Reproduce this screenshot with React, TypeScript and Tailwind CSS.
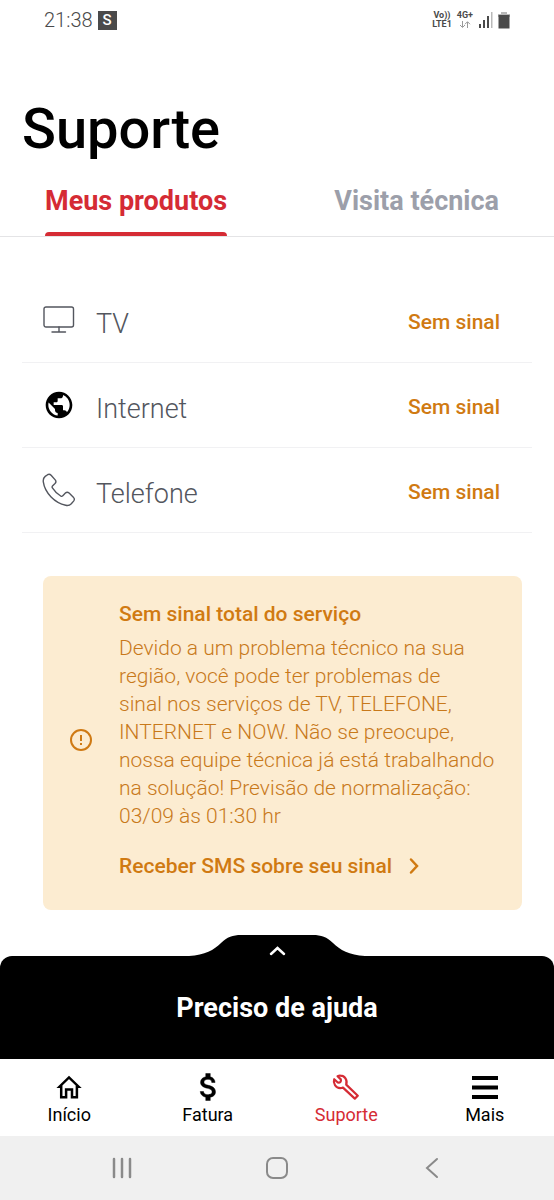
import type { ReactNode } from "react";
import { MdPublic } from "react-icons/md";

function StatusBar() {
  return (
    <header className="flex h-10 items-center justify-between pl-11 pr-11 text-[#4a4a4a]">
      <div className="flex items-center gap-[5px]">
        <time className="text-[20px] leading-6 font-light">21:38</time>
        <span className="flex size-[19px] items-center justify-center bg-[#4a4a4a] text-[15px] leading-none font-medium text-white">
          S
        </span>
      </div>
      <div className="flex items-center gap-[5px] font-bold">
        <div className="text-center text-[9px] leading-[9px]">
          <div>Vo))</div>
          <div>LTE1</div>
        </div>
        <div className="flex flex-col items-center text-[9px] leading-[9px]">
          <div>4G+</div>
          <svg viewBox="0 0 12 9" className="h-[9px] w-3" fill="none" stroke="#9a9a9a" aria-hidden="true">
            <path d="M3.5 1v6M1 5l2.5 2.5L6 5M8.500 8V2M6 4.200L8.500 1.700 11 4.200" />
          </svg>
        </div>
        <svg viewBox="0 0 15 16" className="h-4 w-[15px]" fill="#4a4a4a" aria-hidden="true">
          <path d="M1 12h2v4H1zM5 8h2v8H5zM9 4h2v12H9z" />
          <path d="M13 0h1.500v16H13z" fill="#b9b9b9" />
        </svg>
        <svg viewBox="0 0 12 17" className="h-[17px] w-3" aria-hidden="true">
          <path d="M3 0h6v2h3v3H0V2h3z" fill="#b9b9b9" />
          <path d="M.5 3h11v13.500H.5z" fill="#4a4a4a" />
        </svg>
      </div>
    </header>
  );
}

function TvIcon() {
  return (
    <svg viewBox="0 0 32 28" className="h-7 w-8" fill="none" stroke="#53565e" strokeWidth="1.4" strokeLinecap="round" aria-hidden="true">
      <rect x="1" y="1" width="29.500" height="20" rx="2" />
      <path d="M16 21v5M9 26h13.500" />
    </svg>
  );
}

function PhoneIcon() {
  return (
    <svg viewBox="0 0 34 34" className="size-[34px]" fill="none" stroke="#53565e" strokeWidth="1.4" strokeLinejoin="round" aria-hidden="true">
      <path d="M5.600 1.700 3.200 3.400C1.600 4.700 1 6.400 1.300 8.900c1.600 11.300 11.700 21 22.400 23.400 2.300.5 4.100 0 5.600-1.600l2.300-2.600c1-1.200 1-2.400 0-3.500l-4.500-4.500c-1.200-1.100-2.600-1.100-3.700 0l-2.600 2.700c-.6.600-1.400.7-2.100.2-3.500-2.200-6.200-4.900-8.300-8.200-.5-.8-.3-1.500.3-2.100l2.300-2.200c1.100-1.100 1.100-2.500.2-3.600L9.100 2.300C8.100 1.200 6.900.8 5.600 1.700Z" />
    </svg>
  );
}

function HomeIcon() {
  return (
    <svg viewBox="0 0 30 30" className="size-[30px]" fill="none" stroke="currentColor" strokeWidth="2.500" aria-hidden="true">
      <path d="M5.500 14.700h1.700v10.500h4.900v-7.700h5.900v7.700h4.900V14.700h1.700L15 5.400Z" />
    </svg>
  );
}

function MoneyIcon() {
  return (
    <svg viewBox="1.500 2 20 20" className="size-[30px]" fill="currentColor" aria-hidden="true">
      <path
        stroke="currentColor"
        strokeWidth=".3"
        d="M11.800 10.900c-2.270-.59-3-1.200-3-2.150 0-1.090 1.010-1.850 2.700-1.850 1.780 0 2.440.85 2.500 2.100h2.210c-.07-1.720-1.120-3.300-3.210-3.810V3h-3v2.160c-1.940.42-3.500 1.680-3.500 3.610 0 2.310 1.910 3.460 4.700 4.130 2.500.6 3 1.480 3 2.410 0 .69-.49 1.790-2.700 1.790-2.060 0-2.870-.92-2.980-2.100h-2.200c.12 2.190 1.760 3.420 3.680 3.830V21h3v-2.150c1.950-.37 3.500-1.500 3.500-3.550 0-2.840-2.430-3.810-4.700-4.400z"
      />
    </svg>
  );
}

function WrenchIcon() {
  return (
    <svg viewBox="0 0 30 30" className="size-[30px]" fill="none" stroke="currentColor" strokeWidth="2.200" strokeLinejoin="round" aria-hidden="true">
      <path d="M3.200 7.200C1.800 11.500 4.800 16 9.200 16.200c1 0 1.800-.2 2.800-.6l11.800 11 3-2.800-11.600-11.200C16.800 8 13.500 3.800 9.500 3.700c-1-.1-2 .1-2.900.5l3.200 3.200c.7 2.100-.8 3.600-3 3.100Z" />
    </svg>
  );
}

function MenuIcon() {
  return (
    <svg viewBox="0 0 30 30" className="size-[30px]" fill="currentColor" aria-hidden="true">
      <path d="M2 4h26v4H2zM2 13.500h26v4H2zM2 23h26v4H2z" />
    </svg>
  );
}

function ProductRow({ icon, name }: { icon: ReactNode; name: string }) {
  return (
    <li className="flex h-[85px] items-center justify-between border-b border-[#f1f1f3] pl-5 pr-8">
      <div className="flex items-center gap-5">
        <span className="flex w-[34px] justify-center">{icon}</span>
        <span className="pt-2 text-[27px] leading-8 font-light text-[#53565e]">{name}</span>
      </div>
      <span className="pt-1 text-[21px] leading-7 font-medium text-[#d07a12]">Sem sinal</span>
    </li>
  );
}

function NavItem({ icon, label, active = false }: { icon: ReactNode; label: string; active?: boolean }) {
  return (
    <a
      href="#"
      aria-current={active ? "page" : undefined}
      className={`flex flex-1 flex-col items-center pt-[13px] text-[18px] leading-[26px] ${active ? "text-[#d52b34]" : "text-black"}`}
    >
      {icon}
      {label}
    </a>
  );
}

export default function App() {
  return (
    <div className="flex min-h-screen flex-col bg-white font-['Roboto',sans-serif] text-black">
      <StatusBar />
      <main className="flex flex-1 flex-col">
        <h1 className="px-[22px] pt-[57px] text-[56px] leading-16 font-medium">Suporte</h1>
        <nav className="mt-[17px] flex h-[59px] items-stretch justify-between border-b border-[#e4e4e6] px-[45px] text-[27px] leading-8 font-bold">
          <a href="#" aria-current="page" className="flex flex-col justify-between pt-[7px] text-[#d52b34]">
            Meus produtos
            <span className="h-1 rounded-t-sm bg-[#d52b34]" />
          </a>
          <a href="#" className="pt-[7px] pr-[10px] text-[#9c9faa]">Visita técnica</a>
        </nav>

        <ul className="mx-[22px] mt-[41px]">
          <ProductRow icon={<TvIcon />} name="TV" />
          <ProductRow icon={<MdPublic className="size-8 text-black" />} name="Internet" />
          <ProductRow icon={<PhoneIcon />} name="Telefone" />
        </ul>

        <section className="mx-8 mt-[43px] mb-6 ml-[43px] flex items-center gap-[26px] rounded-lg bg-[#fcecd1] pt-6 pb-[30px] pr-3 pl-[26px] text-[21px] leading-7 text-[#c8791a]">
          <svg viewBox="0 0 24 24" className="size-6 shrink-0" fill="none" stroke="#cf7a14" strokeWidth="2" aria-hidden="true">
            <circle cx="12" cy="12" r="10" />
            <path d="M12 7v6M12 15v2" />
          </svg>
          <div>
            <h2 className="font-medium text-[#d07a12]">Sem sinal total do serviço</h2>
            <p className="mt-[6px] font-light">
              Devido a um problema técnico na sua
              <br />
              região, você pode ter problemas de
              <br />
              sinal nos serviços de TV, TELEFONE,
              <br />
              INTERNET e NOW. Não se preocupe,
              <br />
              nossa equipe técnica já está trabalhando
              <br />
              na solução! Previsão de normalização:
              <br />
              03/09 às 01:30 hr
            </p>
            <a href="#" className="mt-[22px] flex items-center gap-4 font-medium text-[#d07a12]">
              Receber SMS sobre seu sinal
              <svg viewBox="0 0 12 18" className="h-[18px] w-3" fill="none" stroke="currentColor" strokeWidth="2.500" strokeLinecap="round" aria-hidden="true">
                <path d="M3 2.500 9 9l-6 6.500" />
              </svg>
            </a>
          </div>
        </section>
      </main>

      <button type="button" className="block w-full text-white">
        <svg viewBox="0 0 176 21" className="mx-auto h-[21px] w-44" aria-hidden="true">
          <path d="M0 21C16 20 25 15 32 8 38 2 44 0 52 0h72c8 0 14 2 20 8 7 7 16 12 32 13Z" fill="#000" />
          <path d="m82 19 6.500-6 6.500 6" fill="none" stroke="#fff" strokeWidth="2.500" strokeLinecap="round" />
        </svg>
        <span className="flex h-[103px] items-center justify-center rounded-t-xl bg-black text-[27px] leading-8 font-bold">
          Preciso de ajuda
        </span>
      </button>

      <nav className="flex h-[77px]">
        <NavItem icon={<HomeIcon />} label="Início" />
        <NavItem icon={<MoneyIcon />} label="Fatura" />
        <NavItem icon={<WrenchIcon />} label="Suporte" active />
        <NavItem icon={<MenuIcon />} label="Mais" />
      </nav>

      <footer className="flex h-16 items-center justify-around bg-[#f0f0f0] px-11 text-[#8a8a8a]">
        <button type="button" aria-label="Recentes">
          <svg viewBox="0 0 24 24" className="size-6" fill="none" stroke="currentColor" strokeWidth="2.500" strokeLinecap="round">
            <path d="M4 3v18M12 3v18M20 3v18" />
          </svg>
        </button>
        <button type="button" aria-label="Início do sistema">
          <svg viewBox="0 0 24 24" className="size-6" fill="none" stroke="currentColor" strokeWidth="2">
            <rect x="2" y="2" width="20" height="20" rx="6" />
          </svg>
        </button>
        <button type="button" aria-label="Voltar">
          <svg viewBox="0 0 24 24" className="size-6" fill="none" stroke="currentColor" strokeWidth="2" strokeLinecap="round">
            <path d="M17 3 7 12l10 9" />
          </svg>
        </button>
      </footer>
    </div>
  );
}
